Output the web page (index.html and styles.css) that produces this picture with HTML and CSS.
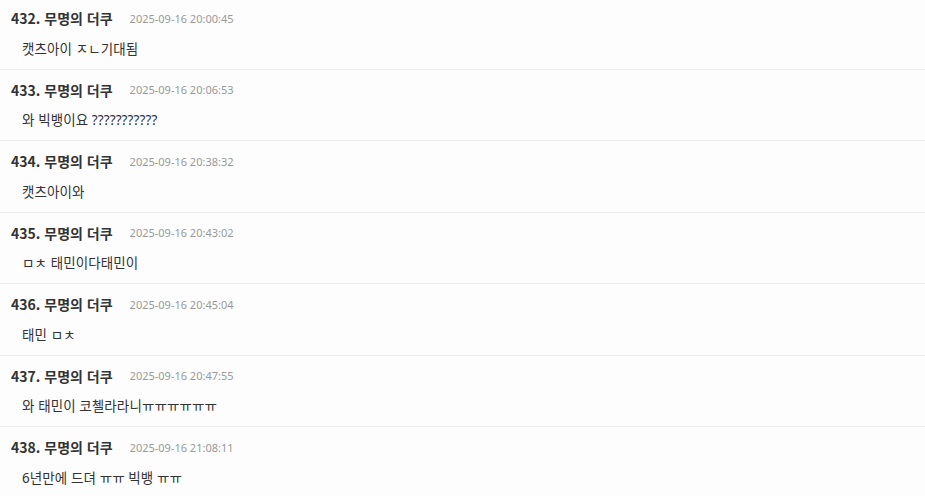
FILE: index.html
```html
<!DOCTYPE html>
<html lang="ko">
<head>
<meta charset="utf-8">
<link rel="stylesheet" href="styles.css">
</head>
<body>
<ul class="comments">
  <li class="comment">
    <div class="head"><span class="name">432. 무명의 더쿠</span><span class="date">2025-09-16 20:00:45</span></div>
    <div class="text">캣츠아이 ㅈㄴ기대됨</div>
  </li>
  <li class="comment">
    <div class="head"><span class="name">433. 무명의 더쿠</span><span class="date">2025-09-16 20:06:53</span></div>
    <div class="text">와 빅뱅이요 ???????????</div>
  </li>
  <li class="comment">
    <div class="head"><span class="name">434. 무명의 더쿠</span><span class="date">2025-09-16 20:38:32</span></div>
    <div class="text">캣츠아이와</div>
  </li>
  <li class="comment">
    <div class="head"><span class="name">435. 무명의 더쿠</span><span class="date">2025-09-16 20:43:02</span></div>
    <div class="text">ㅁㅊ 태민이다태민이</div>
  </li>
  <li class="comment">
    <div class="head"><span class="name">436. 무명의 더쿠</span><span class="date">2025-09-16 20:45:04</span></div>
    <div class="text">태민 ㅁㅊ</div>
  </li>
  <li class="comment">
    <div class="head"><span class="name">437. 무명의 더쿠</span><span class="date">2025-09-16 20:47:55</span></div>
    <div class="text">와 태민이 코첼라라니ㅠㅠㅠㅠㅠㅠ</div>
  </li>
  <li class="comment">
    <div class="head"><span class="name">438. 무명의 더쿠</span><span class="date">2025-09-16 21:08:11</span></div>
    <div class="text">6년만에 드뎌 ㅠㅠ 빅뱅 ㅠㅠ</div>
  </li>
</ul>
</body>
</html>
```
FILE: styles.css
```css
html, body {
  margin: 0;
  padding: 0;
  background: #fdfdfd;
}
body {
  font-family: "Noto Sans", "Noto Sans CJK KR", sans-serif;
  color: #333;
}
.comments {
  list-style: none;
  margin: -2px 0 0 0;
  padding: 0;
}
.comment {
  padding: 10px 11px 10px 11px;
  border-bottom: 1px solid #eeeeee;
}
.head {
  display: flex;
  align-items: center;
  gap: 17px;
  height: 20px;
}
.name {
  font-family: "Noto Sans CJK KR", "Noto Sans", sans-serif;
  font-size: 14px;
  font-weight: 700;
  color: #333;
}
.date {
  font-size: 11px;
  color: #999;
}
.text {
  margin-top: 10.5px;
  padding-left: 11px;
  font-size: 13.5px;
  line-height: 20px;
  color: #333;
}
.text {
  letter-spacing: 0.1px;
}
```
